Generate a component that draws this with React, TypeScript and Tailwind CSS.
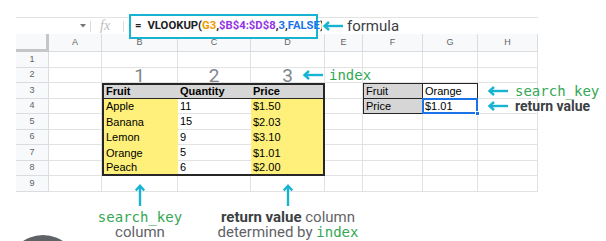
import React from 'react';

const LETTERS = ['A', 'B', 'C', 'D', 'E', 'F', 'G', 'H'];
const CYAN = '#17b3d3';

const FRUITS = [
  ['Apple', '11', '$1.50'],
  ['Banana', '15', '$2.03'],
  ['Lemon', '9', '$3.10'],
  ['Orange', '5', '$1.01'],
  ['Peach', '6', '$2.00'],
];

function LeftArrow() {
  return (
    <svg width="21" height="10" viewBox="0 0 21 10" className="shrink-0">
      <path d="M3 5 H21" stroke={CYAN} strokeWidth="2.4" />
      <path d="M7 1 L2.5 5 L7 9" stroke={CYAN} strokeWidth="2.4" fill="none" />
    </svg>
  );
}

function UpArrow() {
  return (
    <svg width="12" height="23" viewBox="0 0 12 23" className="shrink-0">
      <path d="M6 3 V23" stroke={CYAN} strokeWidth="2.4" />
      <path d="M1.8 7.5 L6 2.8 L10.2 7.5" stroke={CYAN} strokeWidth="2.4" fill="none" />
    </svg>
  );
}

// cells that belong to the two bordered blocks
const covered = (r: number, c: number) =>
  (r >= 3 && r <= 8 && c >= 2 && c <= 4) || (r >= 3 && r <= 4 && (c === 6 || c === 7));

function Cell({ r, c }: { r: number; c: number }) {
  if (r === 0 && c === 0) {
    return <div className="bg-[#f8f9fa] border-r-[3px] border-b-[3px] border-[#c4c7c5]" />;
  }
  if (r === 0) {
    return (
      <div className="bg-[#f8f9fa] border-r border-b border-[#dadce0] flex items-center justify-center text-[9px] text-[#5f6368]">
        {LETTERS[c - 1]}
      </div>
    );
  }
  if (c === 0) {
    return (
      <div className="bg-[#f8f9fa] border-r border-b border-[#dadce0] flex items-center justify-center text-[9px] text-[#5f6368]">
        {r}
      </div>
    );
  }
  if (r === 2 && c >= 2 && c <= 4) {
    return (
      <div className="relative border-r border-b border-[#e2e2e2] flex items-center justify-center">
        <span className="mt-[1px] font-['Roboto'] text-[19px] leading-none text-[#80868b]">{c - 1}</span>
        {c === 4 && (
          <div className="absolute left-[51px] top-1/2 -translate-y-1/2 flex items-center gap-[6px] whitespace-nowrap">
            <LeftArrow />
            <span className="font-['DejaVu_Sans_Mono'] text-[14px] leading-none text-[#34a853]">index</span>
          </div>
        )}
      </div>
    );
  }
  return <div className="border-r border-b border-[#e2e2e2]" />;
}

export default function App() {
  const cells: React.ReactNode[] = [];
  for (let r = 0; r < 10; r++) {
    for (let c = 0; c < 9; c++) {
      if (!covered(r, c)) cells.push(<Cell key={`${r}-${c}`} r={r} c={c} />);
    }
  }

  return (
    <div className="relative w-[606px] h-[241px] overflow-hidden bg-white pt-[17px] pl-[16px] font-['Liberation_Sans',sans-serif]">
      {/* formula bar */}
      <div className="relative z-10 flex items-center w-[522px] h-[17px] border-t border-[#e2e2e2]">
        <div className="w-[74px] h-full flex items-center justify-end pr-[4px]">
          <svg width="6" height="4" viewBox="0 0 6 4">
            <path d="M0 0 H6 L3 3.5 Z" fill="#757575" />
          </svg>
        </div>
        <div className="w-px h-[11px] bg-[#dadce0]" />
        <span className="ml-[9px] w-[23px] font-['Liberation_Serif'] italic text-[14px] leading-none text-[#bdbdbd]">fx</span>
        <div className="w-px h-[11px] bg-[#dadce0]" />
        <div className="ml-[5px] w-[189px] h-[25px] shrink-0 border-2 border-[#17b3d3] bg-white flex items-center pl-[4px] whitespace-nowrap font-['Roboto'] font-bold text-[11.3px] text-[#202124]">
          <span className="mr-[6px]">=</span>
          <span>VLOOKUP(</span>
          <span className="text-[#f29900]">G3</span>
          <span>,</span>
          <span className="text-[#9334e6]">$B$4:$D$8</span>
          <span>,</span>
          <span className="text-[#1a73e8]">3</span>
          <span>,</span>
          <span className="text-[#1a73e8]">FALSE</span>
          <span>)</span>
        </div>
        <div className="ml-[4px] flex items-center gap-[4px] bg-white">
          <LeftArrow />
          <span className="font-['Roboto'] text-[15px] leading-none text-[#3c4043]">formula</span>
        </div>
      </div>

      {/* sheet */}
      <div className="grid w-[522px] grid-cols-[33px_53px_76px_73px_74px_38px_60px_55px_60px] grid-rows-[18px_16px_15px_16px_15px_16px_15px_16px_15px_16px]">
        {cells}

        {/* data table B3:D8 */}
        <div className="col-start-3 col-span-3 row-start-4 row-span-6 border-2 border-[#262626] grid grid-cols-[74px_73px_72px] grid-rows-[14px_15px_16px_15px_16px_13px] text-[11px] text-black">
          {['Fruit', 'Quantity', 'Price'].map((h) => (
            <div key={h} className="bg-[#d6d6d6] border-b border-[#262626] flex items-center pl-[2px] font-bold">
              {h}
            </div>
          ))}
          {FRUITS.map(([fruit, qty, price], i) => (
            <React.Fragment key={fruit}>
              <div className="bg-[#fef07a] flex items-center pl-[2px]">{fruit}</div>
              <div className={`flex items-center pl-[2px] ${i < 4 ? 'border-b border-[#e2e2e2]' : ''}`}>{qty}</div>
              <div className="bg-[#fef07a] flex items-center pl-[2px]">{price}</div>
            </React.Fragment>
          ))}
        </div>

        {/* lookup block F3:G4 */}
        <div className="col-start-7 col-span-2 row-start-4 row-span-2 border border-[#262626] grid grid-cols-[59px_54px] grid-rows-[15px_14px] text-[11px] text-black">
          <div className="bg-[#d6d6d6] border-r border-b border-[#262626] flex items-center pl-[2px]">Fruit</div>
          <div className="relative border-b border-[#262626] flex items-center pl-[2px]">
            Orange
            <div className="absolute left-[calc(100%+10px)] top-1/2 -translate-y-1/2 flex items-center gap-[7px] whitespace-nowrap">
              <LeftArrow />
              <span className="font-['DejaVu_Sans_Mono'] text-[14px] leading-none text-[#34a853]">search_key</span>
            </div>
          </div>
          <div className="bg-[#d6d6d6] border-r border-[#262626] flex items-center pl-[2px]">Price</div>
          <div className="relative flex items-center pl-[2px]">
            $1.01
            <div className="absolute -inset-[1px] border-2 border-[#1a73e8]" />
            <div className="absolute -right-[3px] -bottom-[3px] w-[5px] h-[5px] bg-[#1a73e8] border border-white" />
            <div className="absolute left-[calc(100%+10px)] top-1/2 -translate-y-1/2 flex items-center gap-[7px] whitespace-nowrap">
              <LeftArrow />
              <span className="font-['Roboto'] font-bold text-[14px] leading-none text-[#3c4043]">return value</span>
            </div>
          </div>
        </div>
      </div>

      {/* bottom annotations */}
      <div className="relative -mt-[9px] grid w-[522px] grid-cols-[33px_53px_76px_73px_74px_38px_60px_55px_60px] font-['Roboto'] text-[15px] leading-[15px] text-[#5f6368]">
        <div className="col-start-3 flex flex-col items-center whitespace-nowrap">
          <UpArrow />
          <div className="mt-[4px] h-[15px] font-['DejaVu_Sans_Mono'] text-[14px] leading-[15px] text-[#34a853]">search_key</div>
          <div className="h-[15px]">column</div>
        </div>
        <div className="col-start-5 flex flex-col items-center whitespace-nowrap">
          <UpArrow />
          <div className="mt-[4px] h-[15px]">
            <span className="inline-block leading-[15px] font-bold text-[#3c4043]">return value</span> column
          </div>
          <div className="h-[15px]">
            determined by <span className="inline-block leading-[15px] font-['DejaVu_Sans_Mono'] text-[14px] text-[#34a853]">index</span>
          </div>
        </div>
      </div>

      <div className="absolute left-[7px] top-[235px] w-[72px] h-[72px] rounded-full bg-[#5f6368]" />
    </div>
  );
}
